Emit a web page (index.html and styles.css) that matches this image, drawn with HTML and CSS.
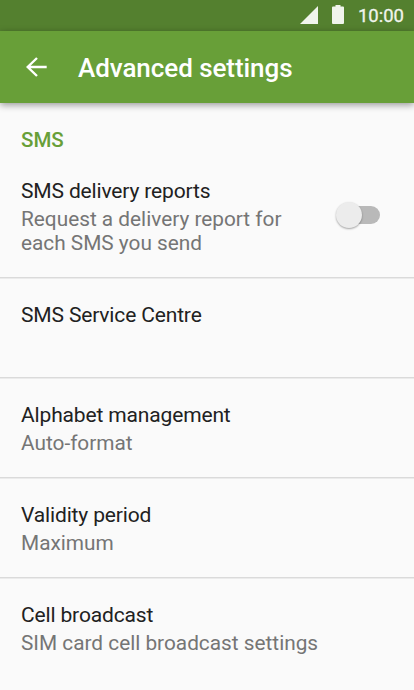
FILE: index.html
```html
<!DOCTYPE html>
<html lang="en">
<head>
  <meta charset="UTF-8" />
  <meta name="viewport" content="width=device-width, initial-scale=1.0"/>
  <title>Advanced settings</title>
  <link rel="stylesheet" href="styles.css">
</head>
<body>

  <div class="statusbar">
    <svg class="signal" width="18" height="18" viewBox="0 0 18 18"><path d="M18 0v18H0z" fill="#f0f4ec"/></svg>
    <svg class="battery" width="12" height="19" viewBox="0 0 12 19"><path d="M3.500 0h5v1.500H11q1 0 1 1V18q0 1-1 1H1q-1 0-1-1V2.500q0-1 1-1h2.500z" fill="#f0f4ec"/></svg>
    <span class="clock">10:00</span>
  </div>

  <header class="toolbar">
    <svg class="back" width="22" height="20" viewBox="0 0 22 20"><path d="M20.700 10H2M11 1L1.700 10l9.300 9" fill="none" stroke="#fff" stroke-width="2.400"/></svg>
    <h1>Advanced settings</h1>
  </header>

  <main>
    <h2>SMS</h2>
    <div class="item first">
      <div class="text">
        <div class="title">SMS delivery reports</div>
        <div class="summary">Request a delivery report for<br>each SMS you send</div>
      </div>
      <div class="switch"><div class="thumb"></div></div>
    </div>
    <div class="item">
      <div class="title">SMS Service Centre</div>
    </div>
    <div class="item">
      <div class="text">
        <div class="title">Alphabet management</div>
        <div class="summary">Auto-format</div>
      </div>
    </div>
    <div class="item">
      <div class="text">
        <div class="title">Validity period</div>
        <div class="summary">Maximum</div>
      </div>
    </div>
    <div class="item">
      <div class="text">
        <div class="title">Cell broadcast</div>
        <div class="summary">SIM card cell broadcast settings</div>
      </div>
    </div>
  </main>

</body>
</html>
```

FILE: styles.css
```css
body {
  margin: 0;
  height: 690px;
  overflow: hidden;
  background: #fafafa;
  font-family: Roboto, sans-serif;
  color: #212121;
}

.statusbar {
  height: 31px;
  background: #54802f;
  color: #f0f4ec;
  display: flex;
  align-items: flex-start;
  justify-content: flex-end;
  padding-right: 10px;
  box-sizing: border-box;
}

.signal {
  margin-top: 6px;
}

.battery {
  margin: 5px 0 0 14px;
}

.clock {
  margin: 5px 0 0 14px;
  font-size: 18.500px;
  line-height: 22px;
  font-weight: 400;
  -webkit-text-stroke: 0.3px #f0f4ec;
}

.toolbar {
  height: 72px;
  background: #689f38;
  color: #fff;
  display: flex;
  align-items: center;
  padding-left: 26px;
  box-shadow: 0 2px 7px rgba(0, 0, 0, 0.4);
}

h1 {
  margin: 2px 0 0 30px;
  font-size: 26px;
  font-weight: 500;
  letter-spacing: -0.06px;
}

h2 {
  margin: 0;
  padding: 24px 21px 0;
  font-size: 20.500px;
  line-height: 26px;
  font-weight: 500;
  color: #689f38;
}

.item {
  height: 100px;
  padding: 23px 21px 0;
  box-sizing: border-box;
  border-top: 1px solid #dadada;
  box-shadow: inset 0 1px #ebebeb;
  display: flex;
}

.item.first {
  height: 124px;
  border-top: none;
  box-shadow: none;
  padding-top: 24px;
}

.text {
  flex: 1;
}

.title {
  font-size: 21px;
  line-height: 29px;
  letter-spacing: -0.15px;
}

.summary {
  margin-top: 1px;
  font-size: 20.800px;
  line-height: 24px;
  color: #757575;
}

.switch {
  width: 36px;
  height: 18px;
  margin: 29px 13px 0 0;
  border-radius: 9px;
  background: #b9b9b9;
  position: relative;
}

.thumb {
  position: absolute;
  left: -8px;
  top: -4px;
  width: 26px;
  height: 26px;
  border-radius: 50%;
  background: #ececec;
  box-shadow: 0 1px 2px rgba(0, 0, 0, 0.35);
}
```
